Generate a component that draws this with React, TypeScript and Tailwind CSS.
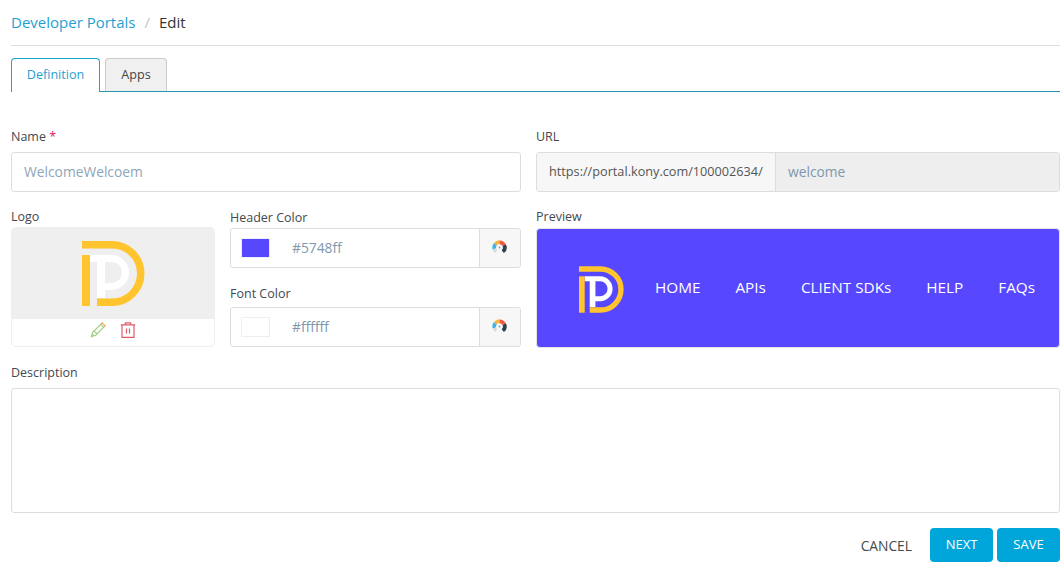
import React from 'react';

function PortalLogo({ className }: { className: string }) {
  return (
    <svg viewBox="0 0 63 65" className={className} fill="none">
      <rect x="15" y="17" width="8" height="40" fill="#ffffff" />
      <path d="M8 17.5H29.5A14 14 0 0 1 29.5 45.5H20" stroke="#ffffff" strokeWidth="7" />
      <path d="M0 3.75H30A28.75 28.75 0 0 1 30 61.25H15" stroke="#ffc42e" strokeWidth="7.5" />
      <rect x="0" y="14" width="8" height="51" fill="#ffc42e" />
    </svg>
  );
}

function WheelIcon() {
  return (
    <svg viewBox="0 0 16 16" className="w-[15px] h-[15px] -mt-[2px] -ml-[2px]" fill="none" strokeWidth="4">
      <path d="M2.6 9.5A5.6 5.6 0 0 1 3.6 4.4" stroke="#3fb4e6" />
      <path d="M3.6 4.4A5.6 5.6 0 0 1 8 2.4" stroke="#f6b73c" />
      <path d="M8 2.4A5.6 5.6 0 0 1 13 5.5" stroke="#ef5a45" />
      <path d="M13 5.5A5.6 5.6 0 0 1 11.5 12.4" stroke="#2f4050" />
      <path d="M4.5 12.4A5.6 5.6 0 0 1 2.6 9.5" stroke="#d5dde2" />
      <circle cx="8" cy="8" r="1" fill="#8a99a6" />
    </svg>
  );
}

function PencilIcon() {
  return (
    <svg viewBox="0 0 16 16" className="w-4 h-4" fill="none">
      <path d="M1.5 14.5L2.7 10.4L10.8 2.4L13.6 5.2L5.6 13.3Z" stroke="#9bd07f" strokeWidth="1.2" />
      <path d="M4.3 9.2L7.1 12M2.2 12.2L3.8 13.8" stroke="#9bd07f" strokeWidth="1.1" />
      <path d="M11 1.9L12.2 0.9L15 3.7L14 5" stroke="#f5a962" strokeWidth="1.3" />
    </svg>
  );
}

function TrashIcon() {
  return (
    <svg viewBox="0 0 16 16" className="w-4 h-4" fill="none" stroke="#df5a68" strokeWidth="1.2">
      <path d="M0.8 2.9H15.2" />
      <path d="M5.4 2.7V0.9H10.6V2.7" />
      <path d="M2 3V15.3H14V3" />
      <path d="M6.5 6.5V11.5M9.5 6.5V11.5" />
    </svg>
  );
}

function ColorField({ swatch, value }: { swatch: string; value: string }) {
  return (
    <div className="h-10 flex border border-[#dddddd] rounded-[3px] bg-white">
      <div className="flex-1 flex items-center pl-[10px]">
        <div className={`w-[29px] h-5 border border-[#eeeeee] ${swatch}`} />
        <span className="ml-[22px] text-[13.8px] text-[#7f97ad]">{value}</span>
      </div>
      <div className="w-[41px] flex items-center justify-center bg-[#f7f7f7] border-l border-[#dddddd] rounded-r-[3px]">
        <WheelIcon />
      </div>
    </div>
  );
}

export default function App() {
  return (
    <div className="w-[1064px] h-[572px] overflow-hidden bg-white pl-[11px] pr-1 font-['Open_Sans',sans-serif] text-[#44494d]">
      {/* Breadcrumb */}
      <div className="h-[46px] border-b border-[#dddddd] flex items-center pb-[1px] text-[15px] pr-0">
        <span className="text-[#1f9fd0]">Developer Portals</span>
        <span className="mx-[9px] text-[#c4c4c4]">/</span>
        <span className="text-[#333333]">Edit</span>
      </div>

      {/* Tabs */}
      <div className="mt-3 h-[34px] flex items-end gap-[5px] border-b border-[#2a93ad]">
        <div className="w-[89px] h-[34px] -mb-px flex items-center justify-center pb-[1px] bg-white border border-b-0 border-[#1ca3cc] rounded-t-[4px] text-[12.6px] text-[#1f9fd0]">
          Definition
        </div>
        <div className="w-[62px] h-[33px] flex items-center justify-center bg-[#f0f0f0] border border-b-0 border-[#cccccc] rounded-t-[4px] text-[12.6px] text-[#444444]">
          Apps
        </div>
      </div>

      {/* Name and URL */}
      <div className="mt-[35px] flex gap-[15px]">
        <div className="w-[510px]">
          <div className="h-[18px] leading-[18px] pt-[1px] text-[12.5px]">
            Name <span className="text-[#e0245e]">*</span>
          </div>
          <div className="mt-[7px] h-10 flex items-center pl-3 border border-[#dddddd] rounded-[3px] text-[13.8px] text-[#8fa5b8]">
            WelcomeWelcoem
          </div>
        </div>
        <div className="w-[524px]">
          <div className="h-[18px] leading-[18px] pt-[1px] text-[12.5px]">URL</div>
          <div className="mt-[7px] h-10 flex border border-[#dddddd] rounded-[3px]">
            <div className="w-[239px] flex items-center pl-3 pb-[1px] bg-[#f7f7f7] border-r border-[#dddddd] text-[12.7px] text-[#555555] whitespace-nowrap">
              https://portal.kony.com/100002634/
            </div>
            <div className="flex-1 flex items-center pl-3 bg-[#eeeeee] text-[13.8px] text-[#7f97ad]">welcome</div>
          </div>
        </div>
      </div>

      {/* Logo, colours and preview */}
      <div className="mt-[15px] flex">
        <div className="w-[204px]">
          <div className="h-[18px] leading-[18px] pt-[1px] text-[12.5px]">Logo</div>
          <div className="mt-[2px] h-[120px] border border-[#eeeeee] rounded-[5px] overflow-hidden flex flex-col">
            <div className="h-[91px] bg-[#efefef] flex items-center justify-center pb-[1px]">
              <PortalLogo className="w-[63px] h-[65px]" />
            </div>
            <div className="flex-1 flex items-center justify-center gap-[14px] pb-[6px]">
              <PencilIcon />
              <TrashIcon />
            </div>
          </div>
        </div>

        <div className="ml-[15px] w-[291px]">
          <div className="h-[18px] leading-[18px] pt-[2px] text-[12.5px]">Header Color</div>
          <div className="mt-[3px]">
            <ColorField swatch="bg-[#5748ff]" value="#5748ff" />
          </div>
          <div className="mt-4 h-[18px] leading-[18px] pt-[1px] text-[12.5px]">Font Color</div>
          <div className="mt-[5px]">
            <ColorField swatch="bg-white" value="#ffffff" />
          </div>
        </div>

        <div className="ml-[15px] w-[524px]">
          <div className="h-[18px] leading-[18px] pt-[1px] text-[12.5px]">Preview</div>
          <div className="mt-[3px] h-[120px] flex items-center pl-[41px] bg-[#5748ff] border border-[#e4e4e4] rounded-[4px] text-[15.3px] text-white whitespace-nowrap">
            <PortalLogo className="w-[45px] h-[47px] ml-[1px] mt-[2px] mr-[31px]" />
            <div className="flex gap-[35px] pb-[2px]">
              <span>HOME</span>
              <span>APIs</span>
              <span>CLIENT SDKs</span>
              <span>HELP</span>
              <span>FAQs</span>
            </div>
          </div>
        </div>
      </div>

      {/* Description */}
      <div className="mt-[15px] h-[18px] leading-[18px] pt-[1px] text-[12.5px]">Description</div>
      <div className="mt-[7px] h-[125px] border border-[#dddddd] rounded-[3px]" />

      {/* Actions */}
      <div className="mt-[15px] flex items-center justify-end gap-1">
        <span className="mr-[14px] mt-[2px] text-[13.8px] text-[#44494d]">CANCEL</span>
        <div className="w-[63px] h-[34px] flex items-center justify-center rounded-[4px] bg-[#00a5d9] text-[13px] text-white">NEXT</div>
        <div className="w-[63px] h-[34px] flex items-center justify-center rounded-[4px] bg-[#00a5d9] text-[13px] text-white">SAVE</div>
      </div>
    </div>
  );
}
